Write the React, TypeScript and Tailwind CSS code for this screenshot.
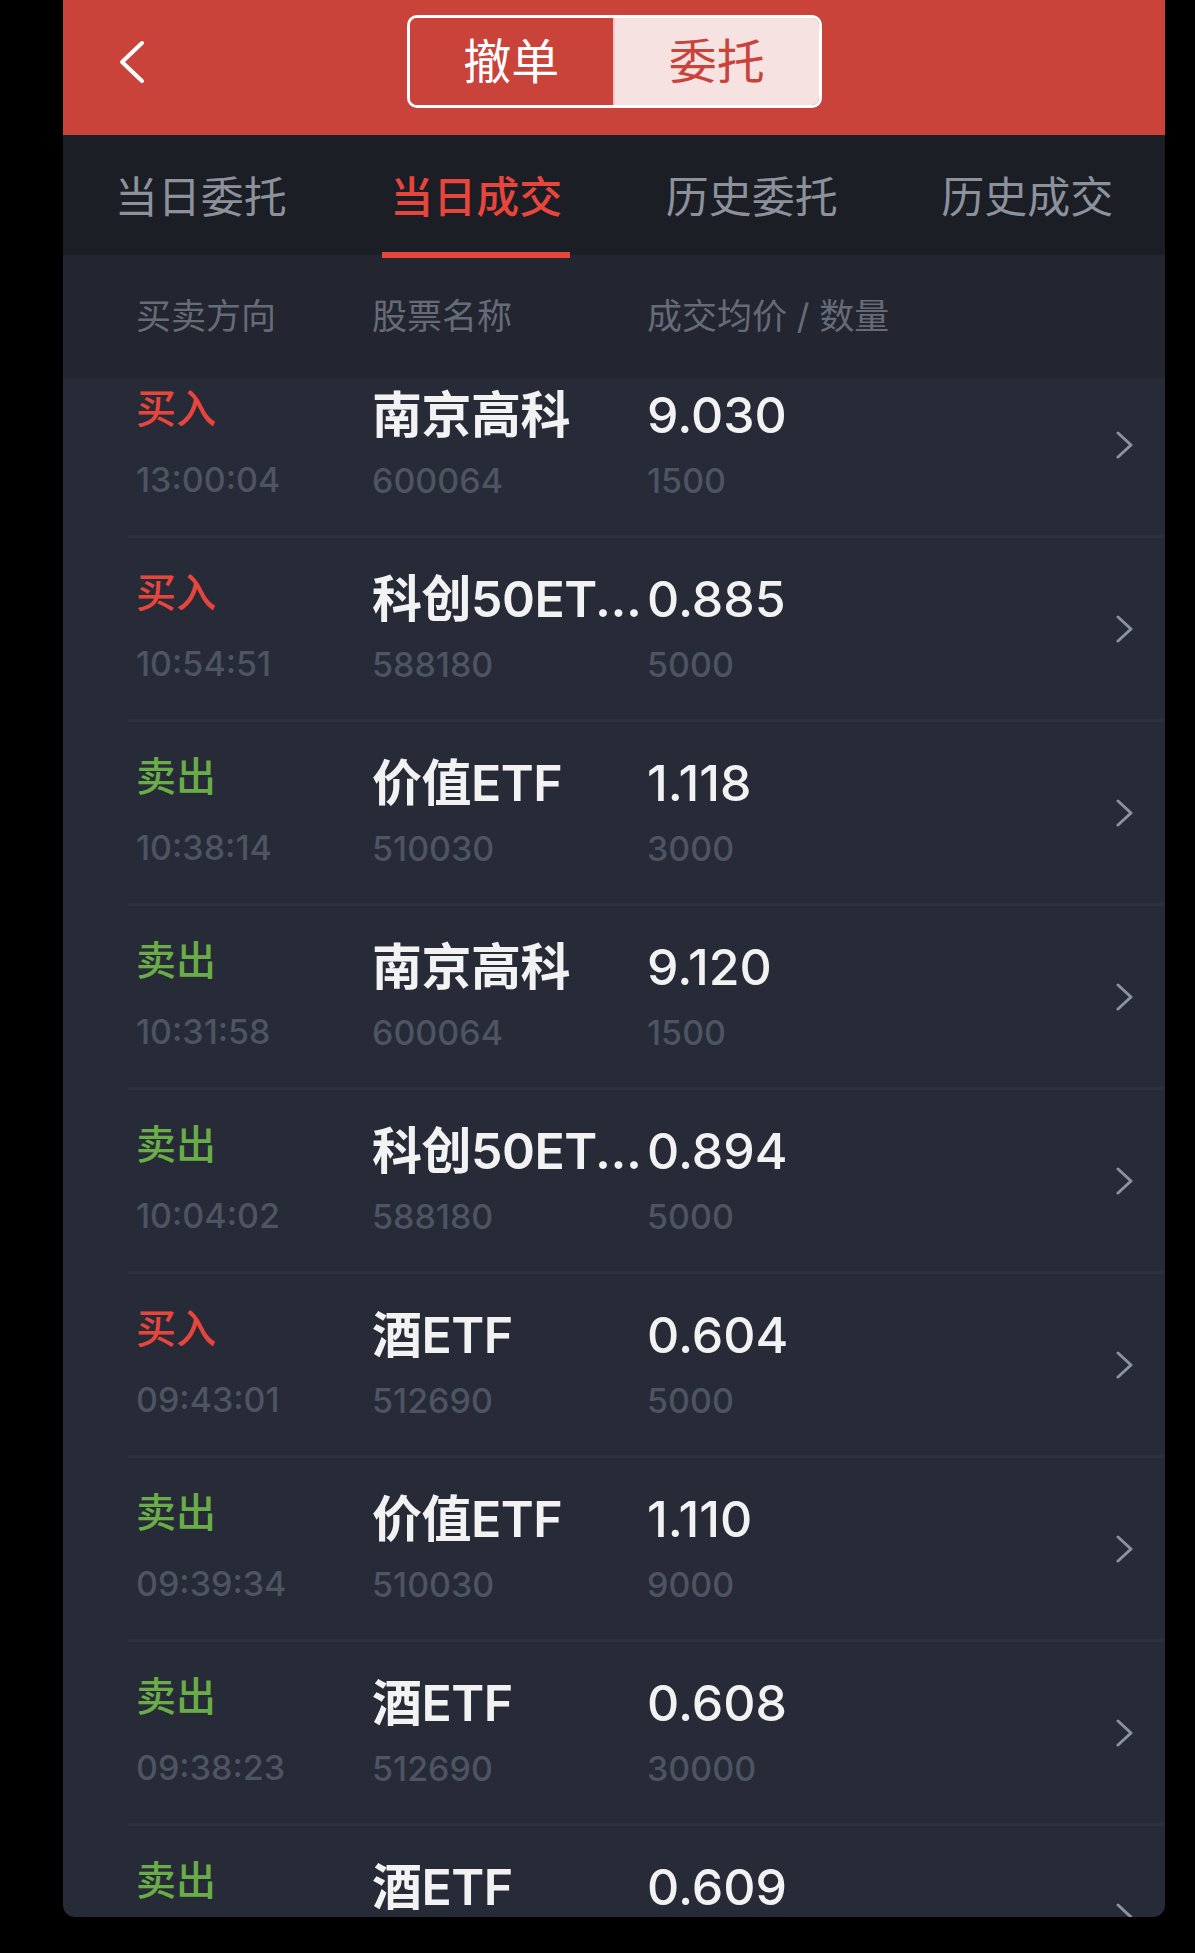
import React from "react";

type Deal = { side: "buy" | "sell"; time?: string; name: string; code?: string; price: string; qty?: string };

const DEALS: Deal[] = [
  { side: "buy", time: "13:00:04", name: "南京高科", code: "600064", price: "9.030", qty: "1500" },
  { side: "buy", time: "10:54:51", name: "科创50ET...", code: "588180", price: "0.885", qty: "5000" },
  { side: "sell", time: "10:38:14", name: "价值ETF", code: "510030", price: "1.118", qty: "3000" },
  { side: "sell", time: "10:31:58", name: "南京高科", code: "600064", price: "9.120", qty: "1500" },
  { side: "sell", time: "10:04:02", name: "科创50ET...", code: "588180", price: "0.894", qty: "5000" },
  { side: "buy", time: "09:43:01", name: "酒ETF", code: "512690", price: "0.604", qty: "5000" },
  { side: "sell", time: "09:39:34", name: "价值ETF", code: "510030", price: "1.110", qty: "9000" },
  { side: "sell", time: "09:38:23", name: "酒ETF", code: "512690", price: "0.608", qty: "30000" },
  // last row is cut off by the bottom edge
  { side: "sell", name: "酒ETF", price: "0.609" },
];

const TABS = ["当日委托", "当日成交", "历史委托", "历史成交"];

function Chevron() {
  return (
    <svg width="17" height="28" viewBox="0 0 17 28" fill="none">
      <path d="M2 2 L15 14 L2 26" stroke="#8b93a0" strokeWidth="3" strokeLinecap="round" strokeLinejoin="round" />
    </svg>
  );
}

function DealRow({ d }: { d: Deal }) {
  const buy = d.side === "buy";
  return (
    <div className="ml-[65px] flex h-[184px] border-t-[3px] border-[#2d313e]">
      {/* direction / time */}
      <div className="flex w-[244px] shrink-0 flex-col pl-[8px] pt-[35px]">
        <span className={`h-[40px] text-[40px] font-medium leading-[40px] ${buy ? "text-[#e8463d]" : "text-[#6aad48]"}`}>
          {buy ? "买入" : "卖出"}
        </span>
        {d.time && <span className="mt-[31px] h-[40px] text-[34px] font-medium leading-[40px] text-[#4e5461]">{d.time}</span>}
      </div>
      {/* name / code */}
      <div className="flex w-[275px] shrink-0 flex-col pt-[36px]">
        <span className="h-[50px] whitespace-nowrap text-[50px] font-semibold leading-[50px] tracking-[-0.5px] text-[#f2f2f2]">{d.name}</span>
        {d.code && <span className="mt-[21px] h-[40px] text-[34px] font-medium leading-[40px] text-[#4e5461]">{d.code}</span>}
      </div>
      {/* price / qty */}
      <div className="flex flex-1 flex-col pt-[36px]">
        <span className="h-[50px] text-[50px] font-medium leading-[50px] text-[#f2f2f2]">{d.price}</span>
        {d.qty && <span className="mt-[21px] h-[40px] text-[34px] font-medium leading-[40px] text-[#4e5461]">{d.qty}</span>}
      </div>
      <div className="flex items-center pr-[32px]">
        <Chevron />
      </div>
    </div>
  );
}

export default function App() {
  return (
    <div className="h-[1953px] w-[1195px] overflow-hidden bg-black font-['Inter','Noto_Sans_CJK_SC',sans-serif]">
      <div className="ml-[63px] flex h-[1917px] w-[1102px] flex-col overflow-hidden rounded-b-[12px] bg-[#272b37]">
        {/* Top bar */}
        <div className="h-[135px] shrink-0 bg-[#c9433b] pt-[15px]">
          <div className="grid h-[93px] grid-cols-[1fr_auto_1fr] items-center">
            <div className="pl-[55px]">
              <svg width="27" height="44" viewBox="0 0 27 44" fill="none">
                <path d="M24 3 L4 22 L24 41" stroke="#ffffff" strokeWidth="4" strokeLinecap="round" strokeLinejoin="round" />
              </svg>
            </div>
            <div className="flex h-[93px] w-[415px] overflow-hidden rounded-[10px] border-[3px] border-white">
              <div className="flex flex-1 items-center justify-center border-r-[2px] border-[#f3c9c6] bg-[#c9433b] text-[48px] text-white">
                撤单
              </div>
              <div className="flex flex-1 items-center justify-center bg-[#f6e2e1] text-[48px] text-[#c9433b]">
                委托
              </div>
            </div>
            <div />
          </div>
        </div>

        {/* Tabs */}
        <div className="grid h-[120px] shrink-0 grid-cols-4 bg-[#1c1e26]">
          {TABS.map((t, i) => (
            <div key={t} className="relative flex items-center justify-center pt-[4px]">
              <span className={`text-[43px] ${i === 1 ? "font-medium text-[#e8453c]" : "text-[#8c929c]"}`}>{t}</span>
              {i === 1 && <div className="absolute bottom-[-3px] z-10 h-[6px] w-[188px] bg-[#e8453c]" />}
            </div>
          ))}
        </div>

        {/* Column headings */}
        <div className="flex h-[123px] shrink-0 items-center bg-[#232631] pl-[73px] text-[35px] text-[#666c77]">
          <span className="w-[236px]">买卖方向</span>
          <span className="w-[275px]">股票名称</span>
          <span>成交均价 / 数量</span>
        </div>

        {/* List (scrolled a little) */}
        <div className="flex-1 overflow-hidden">
          <div className="mt-[-27px]">
            {DEALS.map((d, i) => (
              <DealRow key={i} d={d} />
            ))}
          </div>
        </div>
      </div>
    </div>
  );
}
